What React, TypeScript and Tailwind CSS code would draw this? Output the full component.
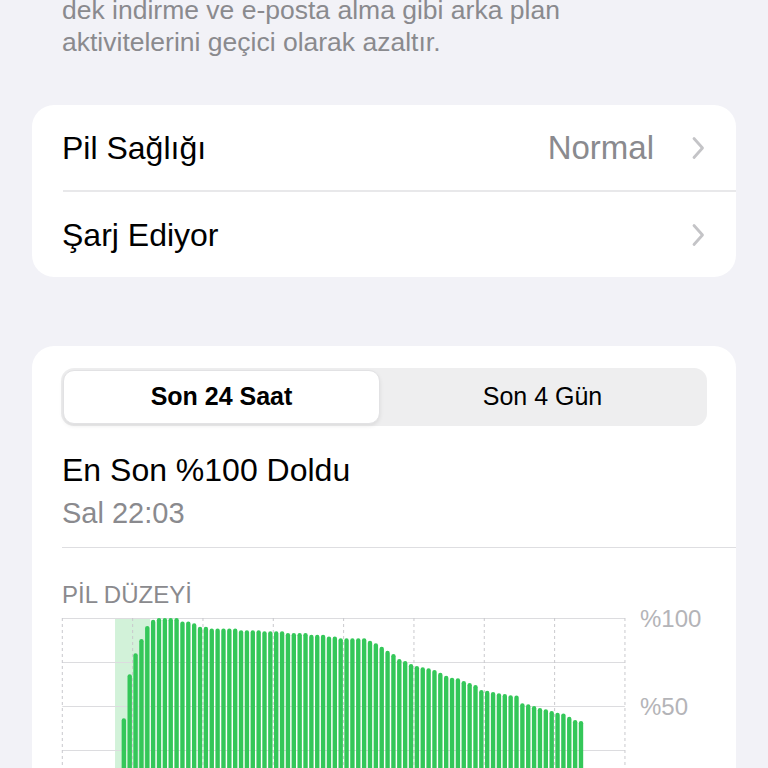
import React from "react";

const font = { fontFamily: '"Liberation Sans", Arial, sans-serif' };

// battery level per 15 min slot, starting at slot 10
const levels = [
  43, 68, 80, 88, 95.5, 99, 100, 100, 100, 100, 98, 98, 97, 95, 95,
  94, 94, 94, 94, 94, 93, 93, 93, 93, 92.5, 92.5, 92.5, 92.5,
  91.5, 91.5, 91.5, 91.5, 90.5, 90.5, 90.5, 89.5, 89.5,
  88.5, 88.5, 88.5, 88.5, 88.5, 87.1, 85.6, 83.7, 81.4, 79.5, 76.7, 75.6,
  73.9, 72.7, 72, 71.4, 70.5, 68.9, 67.2, 66.1, 65.7, 64.2, 63.1, 61.9,
  59.1, 58.7, 58, 57.2, 56.8, 56.1, 56, 51.5, 51, 50, 48.9, 48.1, 47.2,
  46.2, 45.8, 43.9, 42, 41.5,
];

const Chevron = () => (
  <svg width="14" height="24" viewBox="0 0 14 24" fill="none">
    <path d="M3 2.5 L11.5 12 L3 21.5" stroke="#c4c4c7" strokeWidth="2.8" strokeLinecap="round" strokeLinejoin="round" />
  </svg>
);

const Row = ({ label, value }: { label: string; value?: string }) => (
  <div className="flex h-[85px] items-center justify-between pl-[30px] pr-[31px]">
    <span className="text-[32px] leading-[40px] text-black">{label}</span>
    <div className="flex items-center gap-[37px]">
      {value && <span className="text-[33px] leading-[40px] text-[#8a8a8e]">{value}</span>}
      <Chevron />
    </div>
  </div>
);

const BatteryChart = () => {
  const slot = 70.33 / 12;
  const x0 = 0.3;
  const h = 176;
  return (
    <svg width="674" height="160" viewBox="0 0 674 160" className="block overflow-visible">
      <rect x={x0 + 9 * slot} y="0" width={6 * slot} height="176" fill="#d2f2d9" />
      {[0, 44, 88, 132].map((y) => (
        <line key={y} x1={x0} x2={x0 + 562.6} y1={y + 0.5} y2={y + 0.5} stroke="#dcdcdf" strokeWidth="1" />
      ))}
      {Array.from({ length: 9 }).map((_, i) => (
        <line
          key={i}
          x1={x0 + i * 70.33}
          x2={x0 + i * 70.33}
          y1="0"
          y2="176"
          stroke="#c9c9cd"
          strokeWidth="1"
          strokeDasharray="3 3"
        />
      ))}
      {levels.map((lv, i) => {
        const cx = x0 + (10.5 + i) * slot;
        const top = h * (1 - lv / 100);
        return <rect key={i} x={cx - 2.2} y={top} width="4.4" height={h - top + 20} rx="2.2" fill="#34c759" />;
      })}
      <text x="578" y="0" dominantBaseline="central" fontSize="24" fill="#b4b4b8" style={font}>
        %100
      </text>
      <text x="578" y="88" dominantBaseline="central" fontSize="24" fill="#b4b4b8" style={font}>
        %50
      </text>
    </svg>
  );
};

export default function App() {
  return (
    <div className="h-[768px] w-[768px] overflow-hidden bg-[#f2f2f7]" style={font}>
      <p className="mt-[-6px] pl-[62px] pr-[40px] text-[26.5px] leading-[32px] text-[#8a8a8e]">
        dek indirme ve e-posta alma gibi arka plan
        <br />
        aktivitelerini geçici olarak azaltır.
      </p>

      <div className="mx-[32px] mt-[47px] rounded-[22px] bg-white">
        <Row label="Pil Sağlığı" value="Normal" />
        <div className="ml-[31px] h-[2px] bg-[#e8e8ea]" />
        <Row label="Şarj Ediyor" />
      </div>

      <div className="mx-[32px] mt-[69px] rounded-t-[22px] bg-white pb-[40px] pl-[30px] pt-[22px]">
        <div className="ml-[-1px] mr-[29px] flex h-[58px] rounded-[13px] bg-[#eeeeef] p-[2px]">
          <div className="flex w-[317px] items-center justify-center rounded-[11px] border border-[#e2e2e4] bg-white text-[25px] font-semibold text-black shadow-[0_2px_4px_rgba(0,0,0,0.08)]">
            Son 24 Saat
          </div>
          <div className="flex flex-1 items-center justify-center text-[25px] text-black">Son 4 Gün</div>
        </div>

        <div className="mt-[24px] text-[32px] leading-[40px] text-black">En Son %100 Doldu</div>
        <div className="mt-[5px] text-[29px] leading-[36px] text-[#8a8a8e]">Sal 22:03</div>

        <div className="mt-[16px] h-px bg-[#dedee1]" />

        <div className="mt-[33px] text-[24px] leading-[28px] text-[#8a8a8e]">PİL DÜZEYİ</div>
        <div className="mt-[9px]">
          <BatteryChart />
        </div>
      </div>
    </div>
  );
}
